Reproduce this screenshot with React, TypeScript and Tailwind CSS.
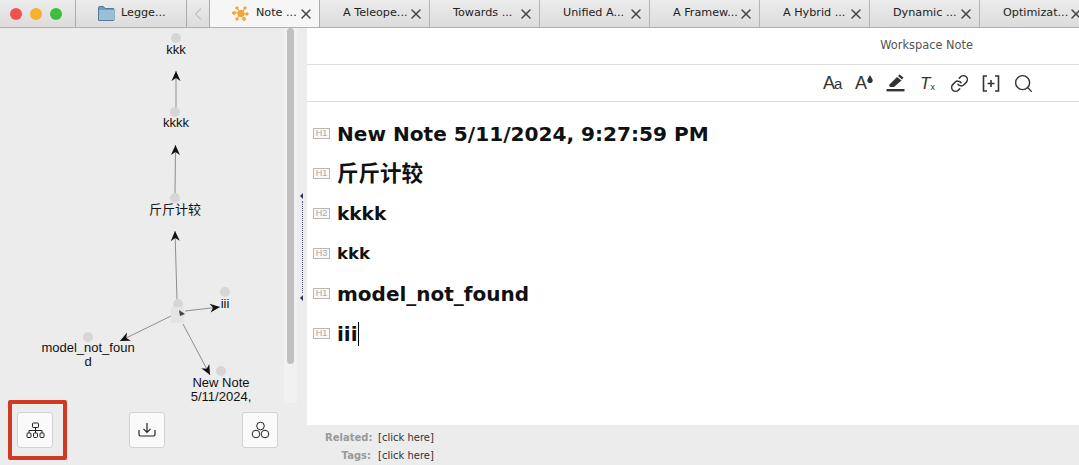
import { X, ChevronLeft, Search, Link } from 'lucide-react';

const tabs = ['A Teleope...', 'Towards ...', 'Unified A...', 'A Framew...', 'A Hybrid ...', 'Dynamic ...', 'Optimizat...'];

const headings = [
    { tag: 'H1', text: 'New Note 5/11/2024, 9:27:59 PM', size: 'text-[20.1px]' },
    { tag: 'H1', text: '斤斤计较', size: 'text-[21.5px]' },
    { tag: 'H2', text: 'kkkk', size: 'text-[18.5px]' },
    { tag: 'H3', text: 'kkk', size: 'text-[16.5px]' },
    { tag: 'H1', text: 'model_not_found', size: 'text-[20px]' },
    { tag: 'H1', text: 'iii', size: 'text-[20px]', caret: true },
];

const uiFont = "font-['DejaVu_Sans','Noto_Sans_CJK_SC',sans-serif]";

const TrafficLights = () => (
    <div className="flex w-[75px] shrink-0 items-center gap-[8px] pl-[10px]">
        <div className="h-[12px] w-[12px] rounded-full bg-[#f0524f]" />
        <div className="h-[12px] w-[12px] rounded-full bg-[#f6b131]" />
        <div className="h-[12px] w-[12px] rounded-full bg-[#3cc13e]" />
    </div>
);

const FolderIcon = () => (
    <svg width="17" height="15" viewBox="0 0 17 15">
        <path d="M0.5 3V1.5a1 1 0 0 1 1-1h4l1.5 2h8a1 1 0 0 1 1 1V14a.5.5 0 0 1-.5.5H1a.5.5 0 0 1-.5-.5Z" fill="#6f9cc0" stroke="#4f7a9c" />
        <rect x="1" y="4" width="15" height="10" fill="#9cbfd8" />
    </svg>
);

const GraphIcon = () => (
    <svg width="17" height="15" viewBox="0 0 17 15" fill="#f0a63c" stroke="#f0a63c">
        <path d="M9 7.5 3 6M9 7.5 5 2M9 7.5 13 2M9 7.5 15 8M9 7.5 5 13M9 7.5 12 13" strokeWidth="1" />
        <circle cx="9" cy="7.5" r="3.2" />
        <circle cx="2" cy="7" r="1.4" />
        <circle cx="5" cy="2" r="1.2" />
        <circle cx="13" cy="2" r="1.2" />
        <circle cx="15" cy="8" r="1.2" />
        <circle cx="5" cy="13" r="1.2" />
        <circle cx="12" cy="13" r="1.4" />
    </svg>
);

const TabBar = () => (
    <div className={`flex h-[28px] shrink-0 overflow-hidden border-b border-[#b0b0b0] bg-gradient-to-b from-[#ececec] to-[#dcdcdc] text-[11.2px] text-[#222] ${uiFont}`}>
        <TrafficLights />
        <div className="flex w-[112px] shrink-0 items-center gap-[6px] border-x border-[#ababab] pl-[22px]">
            <FolderIcon />
            <span>Legge...</span>
        </div>
        <div className="flex w-[23px] shrink-0 items-center justify-center border-r border-[#ababab] text-[#c4c4c4]">
            <ChevronLeft size={20} strokeWidth={1.5} />
        </div>
        <div className="flex w-[110px] shrink-0 items-center border-r border-[#ababab] bg-[#f6f6f6] pl-[22px] pr-[5px]">
            <GraphIcon />
            <span className="ml-[7px] whitespace-nowrap">Note ...</span>
            <X size={16} strokeWidth={2.2} className="ml-auto shrink-0 text-[#444]" />
        </div>
        {tabs.map((t) => (
            <div key={t} className="flex w-[110px] shrink-0 items-center border-r border-[#b4b4b4] pl-[23px] pr-[5px]">
                <span className="whitespace-nowrap">{t}</span>
                <X size={16} strokeWidth={2.2} className="ml-auto shrink-0 text-[#444]" />
            </div>
        ))}
    </div>
);

const Arrow = ({ x1, y1, x2, y2 }: { x1: number; y1: number; x2: number; y2: number }) => {
    const a = Math.atan2(y2 - y1, x2 - x1);
    const p = (d: number, s: number) =>
        `${x2 - d * Math.cos(a) - s * Math.sin(a)},${y2 - d * Math.sin(a) + s * Math.cos(a)}`;
    return (
        <g>
            <line x1={x1} y1={y1} x2={x2} y2={y2} stroke="#8e8e8e" strokeWidth="1" />
            <polygon points={`${x2},${y2} ${p(10, 4.5)} ${p(7, 0)} ${p(10, -4.5)}`} fill="#111" />
        </g>
    );
};

const nodes = [
    [176, 38], [175, 112], [175, 198], [178, 304], [225, 292], [88, 337], [221, 371],
];

const labels = [
    { text: 'kkk', x: 176, y: 43 },
    { text: 'kkkk', x: 176, y: 116 },
    { text: '斤斤计较', x: 175, y: 203 },
    { text: 'iii', x: 225, y: 297 },
    { text: 'model_not_foun', x: 88, y: 341 },
    { text: 'd', x: 88, y: 355 },
    { text: 'New Note', x: 221, y: 376 },
    { text: '5/11/2024,', x: 221, y: 390 },
];

// the graph is a free canvas, coordinates are page coordinates minus the tab bar
const Graph = () => (
    <div className="relative h-[375px] w-[284px] shrink-0 overflow-hidden font-['Liberation_Sans','Noto_Sans_CJK_SC',sans-serif] text-[13px] leading-[14px] text-[#111]">
        <svg width="284" height="375" className="absolute left-0 top-0">
            <g transform="translate(0,-28)">
                <Arrow x1={176} y1={108} x2={176} y2={71} />
                <Arrow x1={175} y1={194} x2={175.5} y2={145} />
                <Arrow x1={177} y1={300} x2={175} y2={231} />
                <Arrow x1={185} y1={311} x2={220} y2={307} />
                <Arrow x1={171} y1={316} x2={120} y2={341} />
                <Arrow x1={183} y1={324} x2={210} y2={375} />
                {nodes.map(([cx, cy]) => (
                    <circle key={`${cx}-${cy}`} cx={cx} cy={cy} r="5" fill="#d6d6d6" />
                ))}
                <rect x="171" y="307" width="13" height="16" fill="#e4e4e4" />
                <path d="M179 310 L185 314 L180 316 Z" fill="#444" />
            </g>
        </svg>
        {labels.map((l) => (
            <span
                key={l.text}
                className="absolute -translate-x-1/2 whitespace-nowrap"
                style={{ left: l.x, top: l.y - 28 }}
            >
                {l.text}
            </span>
        ))}
    </div>
);

const ToolButton = ({ children }: { children: React.ReactNode }) => (
    <div className="flex h-[36px] w-[36px] shrink-0 items-center justify-center rounded-[3px] border border-[#d2d2d2] bg-[#fafafa]">
        {children}
    </div>
);

const SidePanel = () => (
    <div className="flex w-[297px] shrink-0 flex-col bg-[#ececec]">
        <div className="flex h-[375px]">
            <Graph />
            <div className="h-full w-[13px] bg-[#f1f1f1] px-[3px]">
                <div className="h-[336px] rounded-[4px] bg-[#c0c0c0]" />
            </div>
        </div>
        <div className="relative flex flex-1 items-start gap-[76px] pl-[17px] pt-[9px]">
            <div className="absolute left-[8px] top-[-3px] h-[60px] w-[59px] rounded-[2px] border-[4px] border-[#cf3a20]" />
            <ToolButton>
                <svg width="19" height="17" viewBox="0 0 19 17" fill="none" stroke="#222">
                    <rect x="6.5" y="1" width="6" height="4.5" rx=".7" />
                    <path d="M9.5 5.5V8.5M3 11V8.5H16V11M9.5 8.5V11" />
                    <rect x="1" y="11" width="4" height="4.5" rx="1" />
                    <rect x="7.5" y="11" width="4" height="4.5" rx="1" />
                    <rect x="14" y="11" width="4" height="4.5" rx="1" />
                </svg>
            </ToolButton>
            <ToolButton>
                <svg width="18" height="16" viewBox="0 0 18 16" fill="none" stroke="#222" strokeWidth="1.2">
                    <path d="M9 1V10M5.5 6.8 9 10.3l3.5-3.5M1 8v4.5q0 1.5 1.5 1.5h13q1.5 0 1.5-1.5V8" />
                </svg>
            </ToolButton>
            <div className="ml-[1px]">
                <ToolButton>
                    <svg width="19" height="18" viewBox="0 0 19 18" fill="none" stroke="#222">
                        <circle cx="9.5" cy="5" r="3.8" />
                        <circle cx="5" cy="13" r="3.8" />
                        <circle cx="14" cy="13" r="3.8" />
                    </svg>
                </ToolButton>
            </div>
        </div>
    </div>
);

const Splitter = () => (
    <div className="relative w-[10px] shrink-0 bg-[#ececec]">
        <div className="absolute left-[3px] top-[165px] h-0 w-0 border-y-[3px] border-r-[3px] border-y-transparent border-r-[#2c2c6c]" />
        <div className="absolute left-[5px] top-[173px] h-[92px] border-l border-dotted border-[#4a4a80]" />
        <div className="absolute left-[3px] top-[267px] h-0 w-0 border-y-[3px] border-r-[3px] border-y-transparent border-r-[#2c2c6c]" />
    </div>
);

const Toolbar = () => (
    <div className="flex h-[37px] shrink-0 items-center justify-end border-b border-[#dedede] pr-[45px] text-[#333]">
        <span className="flex w-[18px] items-baseline font-['Liberation_Sans',sans-serif] text-[18px] leading-none">
            A<span className="-ml-[1px] text-[15px]">a</span>
        </span>
        <span className="ml-[14px] flex font-['Liberation_Sans',sans-serif] text-[18px] leading-none">
            A
            <svg width="6" height="8" viewBox="0 0 6 8" className="mt-[1px]">
                <path d="M3 0 5.5 4.5A2.7 2.7 0 1 1 .5 4.5Z" fill="#333" />
            </svg>
        </span>
        <svg width="19" height="18" viewBox="0 0 19 18" className="ml-[13px]" fill="#333">
            <path d="M3 11 11 3l4.5 3.5L8 13H4Z" />
            <path d="M12 2l1.5-1.5 4 3L16 5.5Z" />
            <rect x="0.5" y="15" width="18" height="2.4" />
        </svg>
        <span className="ml-[15px] flex w-[15px] items-end font-['Liberation_Sans',sans-serif] text-[17px] italic leading-none">
            T<span className="text-[9px] not-italic">x</span>
        </span>
        <Link size={19} strokeWidth={1.9} className="ml-[15px]" />
        <svg width="18" height="17" viewBox="0 0 18 17" fill="none" stroke="#333" strokeWidth="1.6" className="ml-[13px]">
            <path d="M5 1H1.5V16H5M13 1H16.5V16H13M9 5V12M5.5 8.5H12.5" />
        </svg>
        <Search size={21} strokeWidth={1.6} className="ml-[13px]" />
    </div>
);

const HeadingRow = ({ tag, text, size, caret }: { tag: string; text: string; size: string; caret?: boolean }) => (
    <div className="flex h-[40px] items-center">
        <span className="-mt-[2px] flex h-[11px] w-[17px] items-center justify-center border border-[#b8b8b8] bg-[#f8f8f8] font-['Liberation_Sans',sans-serif] text-[9px] leading-none text-[#aaa]">
            {tag}
        </span>
        <span className={`ml-[7px] font-bold text-[#111] ${size}`}>{text}</span>
        {caret && <span className="h-[24px] w-px bg-black" />}
    </div>
);

const Editor = () => (
    <div className={`flex min-w-0 flex-1 flex-col ${uiFont}`}>
        <div className="flex-1 bg-white">
            <div className="flex h-[37px] items-center justify-end border-b border-[#dedede] pr-[106px] text-[11.4px] text-[#555]">
                Workspace Note
            </div>
            <Toolbar />
            <div className="pl-[6px] pt-[12px]">
                {headings.map((h) => (
                    <HeadingRow key={h.text} {...h} />
                ))}
            </div>
        </div>
        <div className="flex h-[40px] shrink-0 flex-col justify-center gap-[3px] bg-[#ececec] pl-[18px] pt-[2px] text-[10px] leading-[15px]">
            <div className="flex">
                <span className="w-[46px] text-right font-bold text-[#999]">Related:</span>
                <span className="ml-[7px] text-[#333]">[click here]</span>
            </div>
            <div className="flex">
                <span className="w-[46px] text-right font-bold text-[#999]">Tags:</span>
                <span className="ml-[7px] text-[#333]">[click here]</span>
            </div>
        </div>
    </div>
);

export default function App() {
    return (
        <div className="flex h-[465px] w-[1079px] flex-col overflow-hidden bg-[#ececec]">
            <TabBar />
            <div className="flex min-h-0 flex-1">
                <SidePanel />
                <Splitter />
                <Editor />
            </div>
        </div>
    );
}
